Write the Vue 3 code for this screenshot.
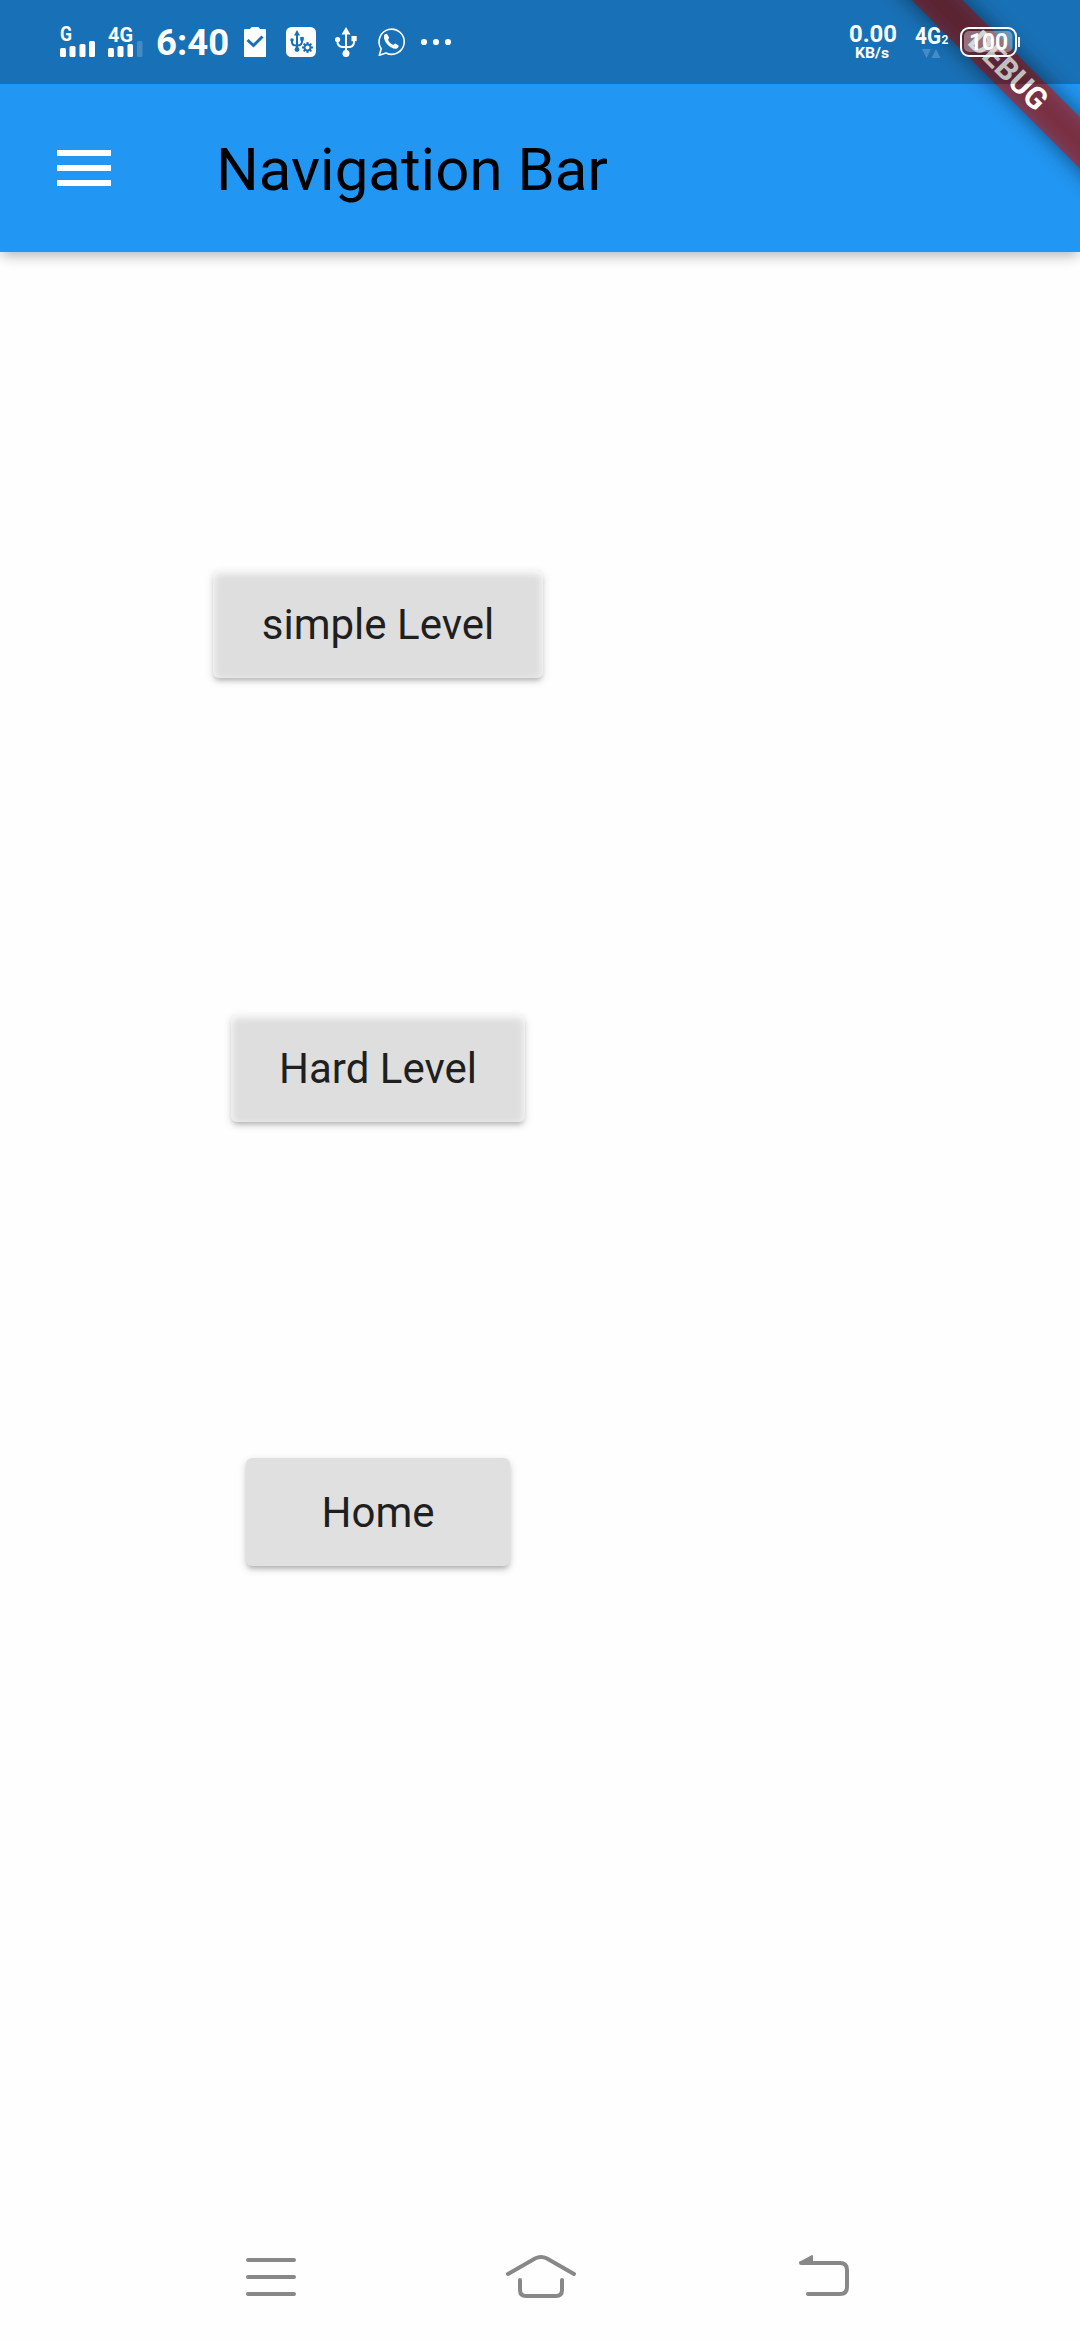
<script setup>
const levels = [
  { label: 'simple Level', width: 330, glow: true },
  { label: 'Hard Level', width: 294, glow: true },
  { label: 'Home', width: 264, glow: false },
]
const gearTeeth = [0, 45, 90, 135, 180, 225, 270, 315]
</script>

<template>
  <div class="screen">
    <header class="top">
      <div class="banner-clip">
        <div class="banner banner-shadow"></div>
        <div class="banner">DEBUG</div>
      </div>

      <div class="status">
        <div class="status-left">
          <svg class="sim" width="36" height="34" viewBox="0 0 36 34" fill="#fff">
            <text x="0" y="17" font-size="20" textLength="12" lengthAdjust="spacingAndGlyphs">G</text>
            <rect x="0" y="24" width="6" height="9" rx="1.5" />
            <rect x="9.5" y="22" width="6" height="11" rx="1.5" />
            <rect x="19.5" y="20" width="6" height="13" rx="1.5" />
            <rect x="29" y="17" width="6" height="16" rx="1.5" />
          </svg>
          <svg class="sim sim-two" width="36" height="34" viewBox="0 0 36 34" fill="#fff">
            <text x="0" y="17.5" font-size="20" textLength="25" lengthAdjust="spacingAndGlyphs">4G</text>
            <rect x="0" y="24" width="6" height="9" rx="1.5" />
            <rect x="9.5" y="22" width="6" height="11" rx="1.5" />
            <rect x="19.5" y="20" width="5.5" height="13" rx="1.5" />
            <rect x="29" y="17" width="5.5" height="16" rx="1.5" opacity="0.2" />
          </svg>
          <span class="time">6:40</span>
          <svg class="clipboard" width="22" height="30" viewBox="0 0 22 30">
            <path d="M1 2H6Q7 0 8 0H14Q15 0 16 2H21Q22 2 22 3V30H0V3Q0 2 1 2Z" fill="#fff" />
            <path d="M3.5 13L9.5 18.5L18.5 9.5" fill="none" stroke="#1a70b6" stroke-width="3" />
          </svg>
          <svg class="usb-box" width="30" height="30" viewBox="0 0 30 30">
            <rect width="30" height="30" rx="5.5" fill="#fff" />
            <g fill="none" stroke="#1a70b6" stroke-width="2">
              <path d="M11 7V23M6 12V15Q6 18.5 10 18.5H12Q16 18 16 14.5V11" />
            </g>
            <g fill="#1a70b6">
              <path d="M11 3L14 8.5H8Z" />
              <circle cx="11" cy="22.5" r="2.4" />
              <circle cx="6" cy="13" r="1.8" />
              <rect x="14.2" y="10" width="3.6" height="3.6" />
            </g>
            <circle cx="21.5" cy="20.5" r="6" fill="#fff" />
            <g fill="#1a70b6">
              <rect
                v-for="angle in gearTeeth"
                :key="angle"
                x="20.5"
                y="15"
                width="2"
                height="2.5"
                :transform="`rotate(${angle} 21.5 20.5)`"
              />
            </g>
            <circle cx="21.5" cy="20.5" r="3" fill="none" stroke="#1a70b6" stroke-width="1.9" />
          </svg>
          <svg class="usb" width="22" height="30" viewBox="0 0 22 30">
            <path d="M11 5V26M2.5 12V15Q2.5 19 7 20H15Q19 19 19 15V11" fill="none" stroke="#fff" stroke-width="2" />
            <g fill="#fff">
              <path d="M11 0L15.5 7.5H6.5Z" />
              <circle cx="11" cy="26.5" r="3.5" />
              <circle cx="2.6" cy="12.5" r="2.6" />
              <rect x="16.5" y="9" width="5.2" height="5.2" />
            </g>
          </svg>
          <svg class="whatsapp" width="28" height="29" viewBox="0 0 28 29">
            <path d="M4.2 20.8A12.6 12.6 0 1 1 9 25L2.3 27.2Z" fill="none" stroke="#fff" stroke-width="1.6" stroke-linejoin="round" />
            <path
              d="M7 7.8C7.6 6 9.6 5.3 10.4 6.4L12 9.2C12.4 10 11.4 11 11 11.7C12 14 14 16 16.3 17C17 16.5 17.8 15.2 18.7 15.7L21.2 17.2C22.3 18 21 20.3 19.2 20.7C14 21.4 6 14 7 7.8Z"
              fill="#fff"
            />
          </svg>
          <svg class="dots" width="32" height="8" viewBox="0 0 32 8" fill="#fff">
            <circle cx="4" cy="4" r="3.1" />
            <circle cx="16" cy="4" r="3.1" />
            <circle cx="28" cy="4" r="3.1" />
          </svg>
        </div>
        <div class="status-right">
          <svg width="48" height="36" viewBox="0 0 48 36" fill="#fff">
            <text x="0" y="18" font-size="24" textLength="48" lengthAdjust="spacingAndGlyphs">0.00</text>
            <text x="6" y="34" font-size="15" textLength="34" lengthAdjust="spacingAndGlyphs">KB/s</text>
          </svg>
          <svg class="network" width="34" height="36" viewBox="0 0 34 36" fill="#fff">
            <text x="0" y="20" font-size="24" textLength="26" lengthAdjust="spacingAndGlyphs">4G</text>
            <text x="26.5" y="20" font-size="12">2</text>
            <path d="M7 25H16L11.5 34ZM16.5 34H25.5L21 25Z" opacity="0.2" />
          </svg>
          <svg class="battery" width="60" height="30" viewBox="0 0 60 30">
            <rect x="1" y="1" width="55" height="28" rx="8" fill="none" stroke="#fff" stroke-width="2" />
            <rect x="4" y="4" width="48.500" height="21" rx="5" fill="#fff" opacity="0.35" />
            <path d="M59 10V20" stroke="#fff" stroke-width="1.8" />
            <text x="9" y="23" font-size="23" textLength="39" lengthAdjust="spacingAndGlyphs" fill="#fff">100</text>
          </svg>
        </div>
      </div>

      <div class="app-bar">
        <svg width="54" height="36" viewBox="0 0 54 36" fill="#fff">
          <path d="M0 0H54V6H0ZM0 15H54V21H0ZM0 30H54V36H0Z" />
        </svg>
        <h1>Navigation Bar</h1>
      </div>
    </header>

    <main>
      <button
        v-for="level in levels"
        :key="level.label"
        class="level"
        :class="{ glow: level.glow }"
        :style="{ width: level.width + 'px' }"
      >
        {{ level.label }}
      </button>
    </main>

    <nav>
      <svg width="50" height="44" viewBox="0 0 50 44">
        <path d="M2 5H48M2 22H48M2 39H48" />
      </svg>
      <svg class="home" width="70" height="44" viewBox="0 0 70 44">
        <path d="M2 19L29 3.500Q35 0.500 41 3.500L68 19M14 25V35Q14 41 20 41H50Q56 41 56 35V25" />
      </svg>
      <svg class="back" width="52" height="44" viewBox="0 0 52 44">
        <path d="M3 8H42Q49 8 49 15V32Q49 39 42 39H10" />
        <path class="tip" d="M1 7L14 0Q15 0 15 1V8H2Z" />
      </svg>
    </nav>
  </div>
</template>

<style>
body {
  margin: 0;
  background: #fefefe;
}
</style>

<style scoped>
.screen {
  width: 1080px;
  height: 2340px;
  display: flex;
  flex-direction: column;
  overflow: hidden;
  background: #fefefe;
  font-family: Roboto, "Noto Sans", sans-serif;
}

svg {
  display: block;
  flex: none;
  overflow: visible;
}

svg text {
  font-weight: 700;
}

.top {
  position: relative;
  flex: none;
  height: 252px;
  background: #2196f3;
  box-shadow: 0 6px 12px -3px rgba(0, 0, 0, 0.2), 0 3px 15px rgba(0, 0, 0, 0.13);
}

.banner-clip {
  position: absolute;
  inset: 0;
  overflow: hidden;
}

.banner {
  position: absolute;
  left: 848px;
  top: 53px;
  width: 320px;
  height: 36px;
  transform: rotate(45deg);
  background: rgba(183, 28, 28, 0.627);
  color: #fff;
  font-size: 30.6px;
  font-weight: 700;
  line-height: 36px;
  text-align: center;
}

.banner-shadow {
  background: rgba(0, 0, 0, 0.5);
  filter: blur(11px);
}

.status {
  position: relative;
  display: flex;
  justify-content: space-between;
  height: 84px;
  box-sizing: border-box;
  padding: 24px 60px 0;
  background: rgba(0, 0, 0, 0.25);
  color: #fff;
}

.status-left,
.status-right {
  display: flex;
  align-items: flex-start;
}

.sim-two {
  margin-left: 12px;
}

.time {
  width: 74px;
  margin: -3px 0 0 12px;
  font-size: 36.5px;
  font-weight: 700;
  line-height: 44px;
}

.clipboard {
  margin: 3px 0 0 14px;
}

.usb-box {
  margin: 3px 0 0 20px;
}

.usb {
  margin: 3px 0 0 19px;
}

.whatsapp {
  margin: 4px 0 0 20px;
}

.dots {
  margin: 14px 0 0 15px;
}

.network {
  margin-left: 18px;
}

.battery {
  margin: 3px 0 0 11px;
}

.app-bar {
  display: flex;
  align-items: center;
  height: 168px;
  padding-left: 57px;
}

h1 {
  margin: 4px 0 0 105px;
  color: #000;
  font-size: 60px;
  font-weight: 400;
  line-height: 70px;
  white-space: nowrap;
}

main {
  flex: 1;
  display: flex;
  flex-direction: column;
  align-items: center;
  gap: 336px;
  width: 756px;
  padding-top: 318px;
}

.level {
  height: 108px;
  padding: 0;
  border: 0;
  border-radius: 6px;
  background: #e0e0e0;
  color: #1f1f1f;
  font: 400 42px/49px Roboto, "Noto Sans", sans-serif;
  box-shadow: 0 4px 5px -2px rgba(0, 0, 0, 0.2), 0 3px 8px rgba(0, 0, 0, 0.18);
}

.glow {
  background: #dedede;
  box-shadow: inset 0 3px 9px #fff, 0 4px 5px -2px rgba(0, 0, 0, 0.2), 0 3px 8px rgba(0, 0, 0, 0.15);
}

nav {
  display: flex;
  align-items: flex-start;
  height: 85px;
  flex: none;
  padding-left: 246px;
}

nav path {
  fill: none;
  stroke: #888;
  stroke-width: 4;
  stroke-linecap: round;
}

nav .tip {
  fill: #888;
  stroke: none;
}

.home {
  margin-left: 210px;
}

.back {
  margin-left: 222px;
}
</style>
